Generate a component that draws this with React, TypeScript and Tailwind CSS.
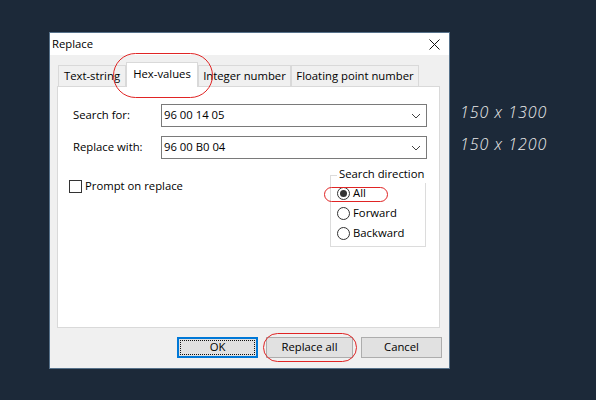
import React from "react";

const ui = { fontFamily: '"Open Sans", "Noto Sans", sans-serif' };

function Combo({ value }: { value: string }) {
  return (
    <div className="flex h-[23px] w-[266px] items-center justify-between border border-[#7a7a7a] bg-white pl-[2px] pr-[4px]">
      <span>{value}</span>
      <svg width="10" height="6" viewBox="0 0 10 6" className="mr-[1px]">
        <path d="M1 1 L5 5 L9 1" fill="none" stroke="#404040" strokeWidth="1" />
      </svg>
    </div>
  );
}

function Radio({ label, checked }: { label: string; checked?: boolean }) {
  return (
    <div className="flex h-[20px] items-center gap-[3px]">
      <span className="flex size-[13px] items-center justify-center rounded-full border border-[#333333] bg-white">
        {checked && <span className="size-[7px] rounded-full bg-[#333333]" />}
      </span>
      <span>{label}</span>
    </div>
  );
}

function Tab({ label, width, active }: { label: string; width: string; active?: boolean }) {
  if (active) {
    return (
      <div className={`${width} relative z-10 -mb-px flex h-[25px] items-start justify-center border border-b-0 border-[#d9d9d9] bg-white pt-[3px]`}>
        {label}
      </div>
    );
  }
  return (
    <div className={`${width} flex h-[21px] items-center justify-center border border-b-0 border-[#d9d9d9] bg-[#f0f0f0]`}>
      {label}
    </div>
  );
}

export default function App() {
  return (
    <div className="relative flex h-[400px] w-[596px] items-start overflow-hidden bg-[#1c2939] text-[11.3px] text-black" style={ui}>
      <div className="ml-[49px] mt-[32px] flex h-[337px] w-[401px] flex-col border border-[#56718a] bg-[#f0f0f0]">
        <div className="flex h-[22px] items-center justify-between bg-white pl-[2px] pr-[9px]">
          <span>Replace</span>
          <svg width="11" height="11" viewBox="0 0 11 11">
            <path d="M0.5 0.5 L10.5 10.5 M10.5 0.5 L0.5 10.5" stroke="#111111" strokeWidth="1" />
          </svg>
        </div>

        <div className="flex flex-1 flex-col px-[7px] pt-[8px]">
          <div className="flex h-[23px] items-end pl-[1px]">
            <Tab label="Text-string" width="w-[68px]" />
            <Tab label="Hex-values" width="w-[72px]" active />
            <Tab label="Integer number" width="w-[93px]" />
            <Tab label="Floating point number" width="w-[128px]" />
          </div>

          <div className="flex h-[242px] w-[383px] flex-col border border-[#d9d9d9] bg-white pl-[15px] pr-[11px] pt-[17px]">
            <div className="flex items-center">
              <span className="w-[88px]">Search for:</span>
              <Combo value="96 00 14 05" />
            </div>
            <div className="mt-[9px] flex items-center">
              <span className="w-[88px]">Replace with:</span>
              <Combo value="96 00 B0 04" />
            </div>

            <div className="flex items-start justify-between">
              <div className="-ml-[4px] mt-[19px] flex items-center gap-[3px]">
                <span className="size-[13px] border border-[#333333] bg-white" />
                <span>Prompt on replace</span>
              </div>
              <div className="relative mr-[2px] mt-[16px] w-[96px] border border-[#dcdcdc] pb-[3px] pl-[6px] pt-[7px]">
                <span className="absolute -top-[10px] left-[6px] whitespace-nowrap bg-white px-[2px]">Search direction</span>
                <Radio label="All" checked />
                <Radio label="Forward" />
                <Radio label="Backward" />
              </div>
            </div>
          </div>

          <div className="mt-[9px] flex justify-end gap-[8px]">
            <div className="flex h-[21px] w-[81px] items-center justify-center border-2 border-[#0078d7] bg-[#e1e1e1] p-[1px]">
              <div className="flex h-full w-full items-center justify-center border border-dotted border-[#111111]">OK</div>
            </div>
            <div className="flex h-[21px] w-[87px] items-center justify-center border border-[#adadad] bg-[#e1e1e1]">
              Replace all
            </div>
            <div className="flex h-[21px] w-[81px] items-center justify-center border border-[#adadad] bg-[#e1e1e1]">
              Cancel
            </div>
          </div>
        </div>
      </div>

      <div className="ml-[10px] mt-[101px] flex flex-col gap-[9px] text-[16px] font-light italic tracking-[1px] text-[#ececec]" style={{ fontFamily: '"Open Sans", sans-serif' }}>
        <span className="leading-[23px]">150 x 1300</span>
        <span className="leading-[23px]">150 x 1200</span>
      </div>

      <span className="pointer-events-none absolute left-[113px] top-[53px] h-[45px] w-[100px] rounded-full border border-[#e02424]" />
      <span className="pointer-events-none absolute left-[324px] top-[187px] h-[15px] w-[64px] rounded-full border border-[#e02424]" />
      <span className="pointer-events-none absolute left-[263px] top-[333px] h-[29px] w-[94px] rounded-full border border-[#e02424]" />
    </div>
  );
}
